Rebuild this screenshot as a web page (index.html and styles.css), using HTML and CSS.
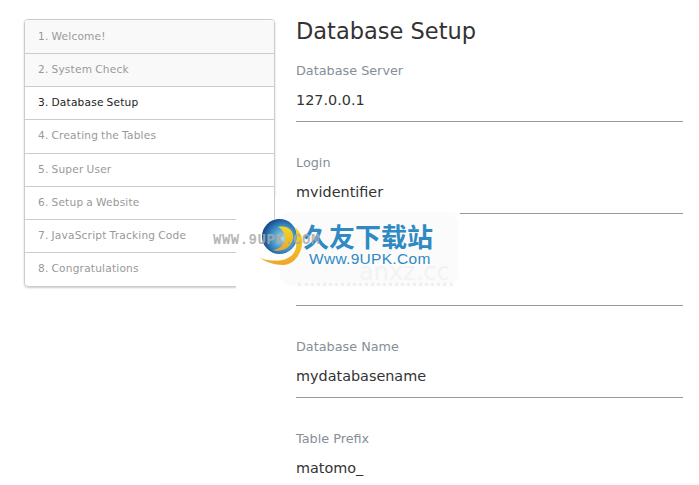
FILE: index.html
```html
<!DOCTYPE html>
<html lang="en">
<head>
  <meta charset="UTF-8">
  <meta name="viewport" content="width=device-width, initial-scale=1.0">
  <title>Database Setup</title>
  <link rel="stylesheet" href="styles.css">
</head>
<body>
  <div class="page">
    <ul class="steps">
      <li class="step done">1. Welcome!</li>
      <li class="step done">2. System Check</li>
      <li class="step active">3. Database Setup</li>
      <li class="step">4. Creating the Tables</li>
      <li class="step">5. Super User</li>
      <li class="step">6. Setup a Website</li>
      <li class="step">7. JavaScript Tracking Code</li>
      <li class="step">8. Congratulations</li>
    </ul>
    <div class="content">
      <h1>Database Setup</h1>
      <div class="field">
        <label>Database Server</label>
        <div class="value">127.0.0.1</div>
      </div>
      <div class="field">
        <label>Login</label>
        <div class="value">myidentifier</div>
      </div>
      <div class="field">
        <label>&nbsp;</label>
        <div class="value"></div>
      </div>
      <div class="field">
        <label>Database Name</label>
        <div class="value">mydatabasename</div>
      </div>
      <div class="field last">
        <label>Table Prefix</label>
        <div class="value">matomo_</div>
      </div>
    </div>
  </div>

  <!-- download site watermark lying over the page -->
  <div class="wm-panel"></div>
  <div class="wm-panel-left"></div>
  <div class="wm-ghost"></div>
  <div class="wm-ghost-text">anxz.cc</div>
  <div class="wm-dots"></div>
  <svg class="wm-logo" width="50" height="50" viewBox="0 0 50 50">
    <defs>
      <radialGradient id="ball" cx="0.6" cy="0.55" r="0.62">
        <stop offset="0" stop-color="#a9dbe6"/>
        <stop offset="0.55" stop-color="#3d92c8"/>
        <stop offset="1" stop-color="#123f86"/>
      </radialGradient>
      <linearGradient id="moon" x1="0" y1="0" x2="0" y2="1">
        <stop offset="0" stop-color="#f4d820"/>
        <stop offset="1" stop-color="#efa52a"/>
      </linearGradient>
    </defs>
    <circle cx="19.5" cy="17.5" r="17.5" fill="url(#ball)"/>
    <path d="M18 8 C27 6 34 11 33 19 C32 28 22 34 12 31 C19 31 25 26 25 19 C25 14 22 10 18 8 Z" fill="url(#moon)"/>
    <path d="M35 8 C41 13 43 20 42 26 C40 38 32 46 23 46 C14 46 6 43 0 39 C8 42 16 42 23 41 C30 39 35 35 36 28 C37 21 37 14 35 8 Z" fill="url(#moon)"/>
  </svg>
  <div class="wm-name">久友下载站</div>
  <div class="wm-site">Www.9UPK.Com</div>
  <div class="wm-url">WWW.9UPK.COM</div>
  <div class="bottom-strip"></div>
</body>
</html>
```

FILE: styles.css
```css
html {
  overflow: hidden;
}

body {
  font-family: 'DejaVu Sans', sans-serif;
  background-color: white;
  margin: 0;
  height: 485px;
  overflow: hidden;
}

.page {
  display: flex;
  align-items: flex-start;
  gap: 21px;
  padding: 0 16px 0 24px;
}

.steps {
  list-style: none;
  width: 251px;
  flex: none;
  margin: 19px 0 0;
  padding: 0;
  box-sizing: border-box;
  border: 1px solid #ccc;
  border-radius: 4px;
  box-shadow: 0 1px 2px rgba(0, 0, 0, 0.2);
  overflow: hidden;
}

.step {
  height: 33.2px;
  line-height: 31.4px;
  padding-left: 13px;
  box-sizing: border-box;
  font-size: 10.6px;
  letter-spacing: 0.2px;
  word-spacing: -0.6px;
  color: #999;
  border-bottom: 1px solid #ccc;
}

.step:first-child {
  height: 34px;
  line-height: 32px;
}

.step:last-child {
  border-bottom: none;
}

.step.done {
  background-color: #f9f9f9;
}

.step.active {
  color: #222;
}

.content {
  flex: 1;
}

h1 {
  font-size: 22.5px;
  font-weight: normal;
  color: #333;
  margin: 18px 0 0;
  line-height: 26px;
}

.field {
  height: 92px;
}

.content h1 + .field {
  margin-top: 19px;
}

.field.last {
  height: 58px;
}

label {
  display: block;
  font-size: 12.8px;
  line-height: 16px;
  color: #868e96;
}

.value {
  height: 36px;
  margin-top: 6px;
  font-size: 14.4px;
  line-height: 30px;
  color: #333;
  border-bottom: 1px solid #999;
}

.field.last .value {
  border-bottom: none;
}

.wm-panel {
  position: absolute;
  left: 275px;
  top: 197px;
  width: 185px;
  height: 93px;
  background: rgba(255, 255, 255, 0.94);
}

.wm-panel-left {
  position: absolute;
  left: 236px;
  top: 219px;
  width: 39px;
  height: 70px;
  background: white;
}

.wm-ghost {
  position: absolute;
  left: 280px;
  top: 212px;
  width: 178px;
  height: 74px;
  border-radius: 12px;
  background: #fbfbfb;
}

.wm-ghost-text {
  position: absolute;
  left: 359px;
  top: 258px;
  width: 95px;
  overflow: hidden;
  font-size: 24px;
  white-space: nowrap;
  color: #f3f3f3;
}

.wm-dots {
  position: absolute;
  left: 298px;
  top: 283px;
  width: 155px;
  border-top: 3px dotted #f0f0f0;
}

.wm-logo {
  position: absolute;
  left: 260px;
  top: 219px;
}

.wm-url {
  position: absolute;
  left: 213px;
  top: 232px;
  font-family: 'Liberation Mono', monospace;
  font-size: 14px;
  font-weight: bold;
  line-height: 16px;
  letter-spacing: 0.5px;
  color: rgba(170, 170, 170, 0.85);
}

.wm-name {
  position: absolute;
  left: 303px;
  top: 218px;
  font-family: 'Noto Sans CJK SC', sans-serif;
  font-size: 26px;
  font-weight: bold;
  line-height: 36px;
  color: #2f8ac4;
}

.wm-site {
  position: absolute;
  left: 309px;
  top: 250px;
  font-family: 'Liberation Sans', sans-serif;
  font-size: 15.5px;
  line-height: 18px;
  letter-spacing: 0.3px;
  color: #2f8ac4;
}

.bottom-strip {
  position: absolute;
  left: 160px;
  right: 0;
  top: 483px;
  height: 2px;
  background: #fafafa;
}
```
